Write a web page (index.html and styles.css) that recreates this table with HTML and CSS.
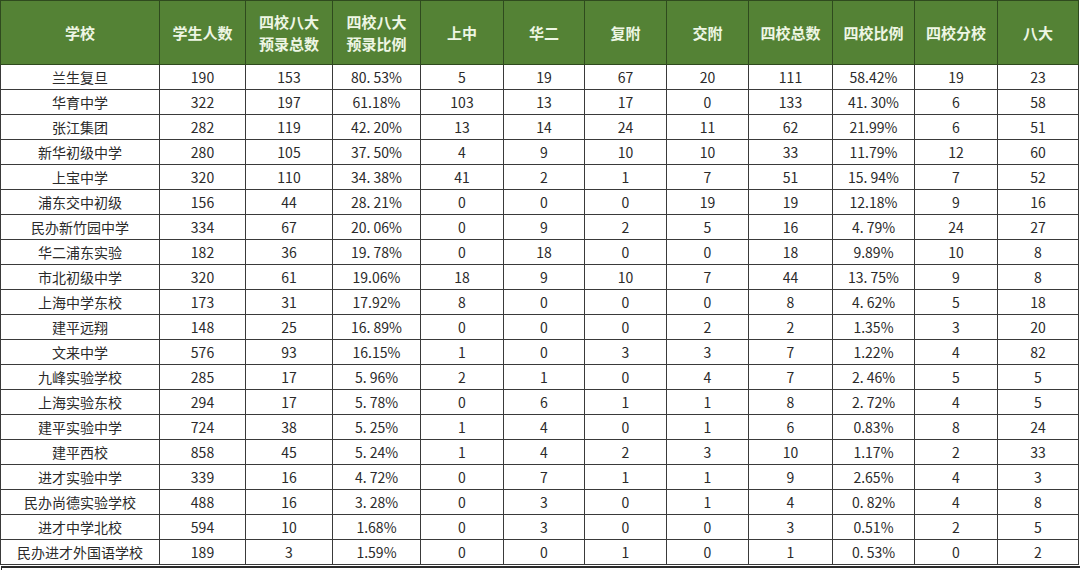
FILE: index.html
```html
<!DOCTYPE html>
<html lang="zh">
<head>
<meta charset="utf-8">
<link rel="stylesheet" href="styles.css">
</head>
<body>
<table class="grid">
<colgroup>
<col style="width:159px"><col style="width:86px"><col style="width:87px"><col style="width:88px"><col style="width:83px"><col style="width:81px"><col style="width:82px"><col style="width:82px"><col style="width:84px"><col style="width:82px"><col style="width:83px"><col style="width:81px">
</colgroup>
<thead>
<tr><th>学校</th><th>学生人数</th><th>四校八大<br>预录总数</th><th>四校八大<br>预录比例</th><th>上中</th><th>华二</th><th>复附</th><th>交附</th><th>四校总数</th><th>四校比例</th><th>四校分校</th><th>八大</th></tr>
</thead>
<tbody>
<tr><td>兰生复旦</td><td>190</td><td>153</td><td>80. 53%</td><td>5</td><td>19</td><td>67</td><td>20</td><td>111</td><td>58.42%</td><td>19</td><td>23</td></tr>
<tr><td>华育中学</td><td>322</td><td>197</td><td>61.18%</td><td>103</td><td>13</td><td>17</td><td>0</td><td>133</td><td>41. 30%</td><td>6</td><td>58</td></tr>
<tr><td>张江集团</td><td>282</td><td>119</td><td>42. 20%</td><td>13</td><td>14</td><td>24</td><td>11</td><td>62</td><td>21.99%</td><td>6</td><td>51</td></tr>
<tr><td>新华初级中学</td><td>280</td><td>105</td><td>37. 50%</td><td>4</td><td>9</td><td>10</td><td>10</td><td>33</td><td>11.79%</td><td>12</td><td>60</td></tr>
<tr><td>上宝中学</td><td>320</td><td>110</td><td>34. 38%</td><td>41</td><td>2</td><td>1</td><td>7</td><td>51</td><td>15. 94%</td><td>7</td><td>52</td></tr>
<tr><td>浦东交中初级</td><td>156</td><td>44</td><td>28. 21%</td><td>0</td><td>0</td><td>0</td><td>19</td><td>19</td><td>12.18%</td><td>9</td><td>16</td></tr>
<tr><td>民办新竹园中学</td><td>334</td><td>67</td><td>20. 06%</td><td>0</td><td>9</td><td>2</td><td>5</td><td>16</td><td>4. 79%</td><td>24</td><td>27</td></tr>
<tr><td>华二浦东实验</td><td>182</td><td>36</td><td>19. 78%</td><td>0</td><td>18</td><td>0</td><td>0</td><td>18</td><td>9.89%</td><td>10</td><td>8</td></tr>
<tr><td>市北初级中学</td><td>320</td><td>61</td><td>19.06%</td><td>18</td><td>9</td><td>10</td><td>7</td><td>44</td><td>13. 75%</td><td>9</td><td>8</td></tr>
<tr><td>上海中学东校</td><td>173</td><td>31</td><td>17.92%</td><td>8</td><td>0</td><td>0</td><td>0</td><td>8</td><td>4. 62%</td><td>5</td><td>18</td></tr>
<tr><td>建平远翔</td><td>148</td><td>25</td><td>16. 89%</td><td>0</td><td>0</td><td>0</td><td>2</td><td>2</td><td>1.35%</td><td>3</td><td>20</td></tr>
<tr><td>文来中学</td><td>576</td><td>93</td><td>16.15%</td><td>1</td><td>0</td><td>3</td><td>3</td><td>7</td><td>1.22%</td><td>4</td><td>82</td></tr>
<tr><td>九峰实验学校</td><td>285</td><td>17</td><td>5. 96%</td><td>2</td><td>1</td><td>0</td><td>4</td><td>7</td><td>2. 46%</td><td>5</td><td>5</td></tr>
<tr><td>上海实验东校</td><td>294</td><td>17</td><td>5. 78%</td><td>0</td><td>6</td><td>1</td><td>1</td><td>8</td><td>2. 72%</td><td>4</td><td>5</td></tr>
<tr><td>建平实验中学</td><td>724</td><td>38</td><td>5. 25%</td><td>1</td><td>4</td><td>0</td><td>1</td><td>6</td><td>0.83%</td><td>8</td><td>24</td></tr>
<tr><td>建平西校</td><td>858</td><td>45</td><td>5. 24%</td><td>1</td><td>4</td><td>2</td><td>3</td><td>10</td><td>1.17%</td><td>2</td><td>33</td></tr>
<tr><td>进才实验中学</td><td>339</td><td>16</td><td>4. 72%</td><td>0</td><td>7</td><td>1</td><td>1</td><td>9</td><td>2.65%</td><td>4</td><td>3</td></tr>
<tr><td>民办尚德实验学校</td><td>488</td><td>16</td><td>3. 28%</td><td>0</td><td>3</td><td>0</td><td>1</td><td>4</td><td>0. 82%</td><td>4</td><td>8</td></tr>
<tr><td>进才中学北校</td><td>594</td><td>10</td><td>1.68%</td><td>0</td><td>3</td><td>0</td><td>0</td><td>3</td><td>0.51%</td><td>2</td><td>5</td></tr>
<tr><td>民办进才外国语学校</td><td>189</td><td>3</td><td>1.59%</td><td>0</td><td>0</td><td>1</td><td>0</td><td>1</td><td>0. 53%</td><td>0</td><td>2</td></tr>
</tbody>
</table>
<div class="below"></div>
</body>
</html>
```
FILE: styles.css
```css
html, body {
  margin: 0;
  padding: 0;
  background: #ffffff;
}
body {
  font-family: "Noto Sans CJK SC", "Noto Sans", sans-serif;
  color: #2a2a2a;
}
.grid {
  border-collapse: collapse;
  table-layout: fixed;
  width: 1078px;
}
.grid th, .grid td {
  border: 1px solid #3a3a3a;
  text-align: center;
  padding: 0;
  overflow: hidden;
  white-space: nowrap;
}
.grid th {
  background: #548235;
  color: #eef6e4;
  font-size: 15px;
  font-weight: 700;
  line-height: 22px;
  height: 63px;
  border-color: #2f4a1e;
}
.grid td {
  font-size: 14px;
  height: 24px;
  line-height: 20px;
}
.below {
  margin-top: 1px;
  margin-left: 1px;
  height: 10px;
  border-top: 2px solid #2a2a2a;
  border-left: 1px solid #2a2a2a;
}
```
